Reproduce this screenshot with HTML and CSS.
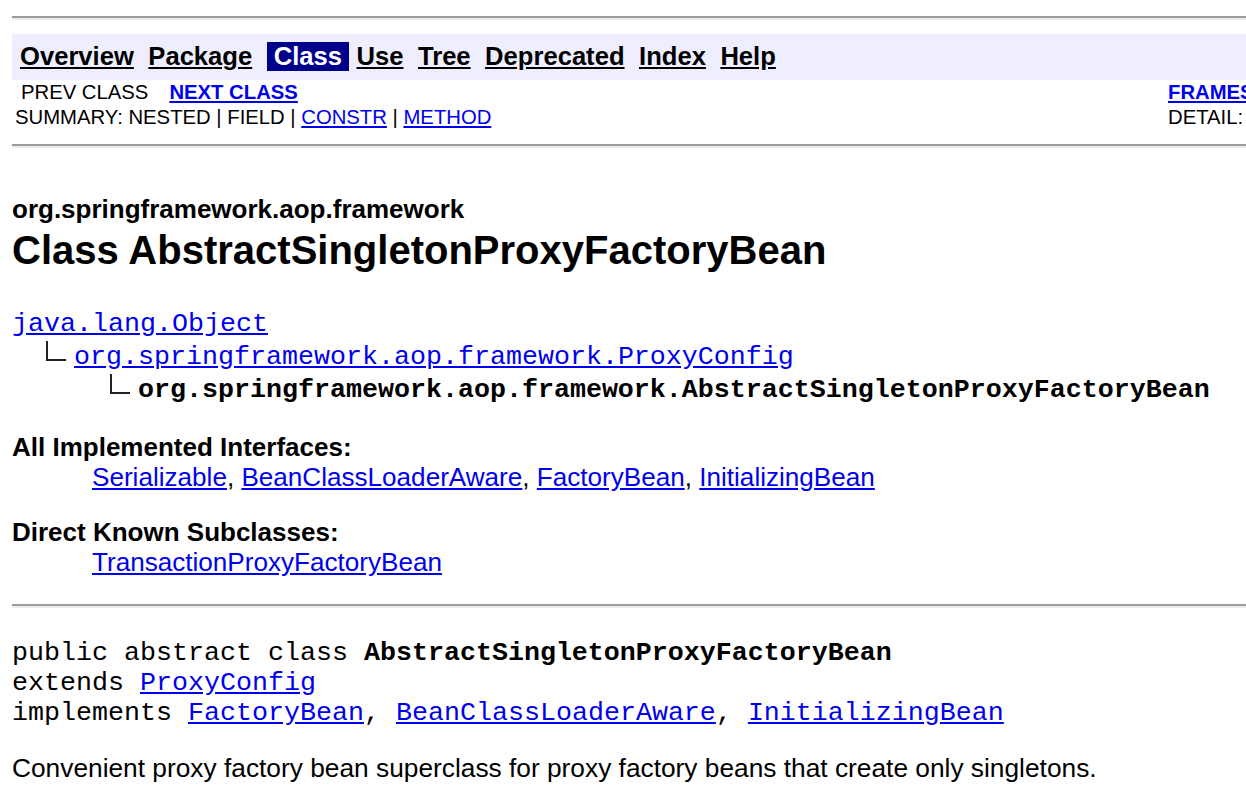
FILE: index.html
```html
<!DOCTYPE html>
<html lang="en">
<head>
<meta charset="utf-8">
<title>AbstractSingletonProxyFactoryBean</title>
<link rel="stylesheet" href="styles.css">
</head>
<body>
<div class="page">
  <hr class="rule rule-top">
  <div class="navbar">
    <a class="nav-item" href="#">Overview</a>
    <a class="nav-item" href="#">Package</a>
    <span class="nav-item nav-current">Class</span>
    <a class="nav-item" href="#">Use</a>
    <a class="nav-item" href="#">Tree</a>
    <a class="nav-item" href="#">Deprecated</a>
    <a class="nav-item" href="#">Index</a>
    <a class="nav-item" href="#">Help</a>
  </div>
  <div class="subnav">
    <div class="sub-cell sub-prevnext"><span class="prev">PREV CLASS</span><a class="next" href="#">NEXT CLASS</a></div>
    <div class="sub-cell sub-right"><a class="frames" href="#">FRAMES</a></div>
    <div class="sub-cell sub-summary">SUMMARY:&nbsp;NESTED&nbsp;|&nbsp;FIELD&nbsp;|&nbsp;<a href="#">CONSTR</a>&nbsp;|&nbsp;<a href="#">METHOD</a></div>
    <div class="sub-cell sub-right">DETAIL:</div>
  </div>
  <hr class="rule rule-mid">
  <div class="pkg">org.springframework.aop.framework</div>
  <h2 class="title">Class AbstractSingletonProxyFactoryBean</h2>
  <pre class="tree"><a href="#">java.lang.Object</a>
  <svg class="inherit" width="30" height="20" viewBox="0 0 30 20"><rect x="2" y="0" width="2" height="20" fill="#222"/><rect x="2" y="18" width="20" height="2" fill="#222"/></svg><a href="#">org.springframework.aop.framework.ProxyConfig</a>
      <svg class="inherit" width="30" height="20" viewBox="0 0 30 20"><rect x="2" y="0" width="2" height="20" fill="#222"/><rect x="2" y="18" width="20" height="2" fill="#222"/></svg><b>org.springframework.aop.framework.AbstractSingletonProxyFactoryBean</b></pre>
  <dl class="info info-first">
    <dt>All Implemented Interfaces:</dt>
    <dd><a href="#">Serializable</a>, <a href="#">BeanClassLoaderAware</a>, <a href="#">FactoryBean</a>, <a href="#">InitializingBean</a></dd>
  </dl>
  <dl class="info info-second">
    <dt>Direct Known Subclasses:</dt>
    <dd><a href="#">TransactionProxyFactoryBean</a></dd>
  </dl>
  <hr class="rule rule-bottom">
  <pre class="sig">public abstract class <b>AbstractSingletonProxyFactoryBean</b>
extends <a href="#">ProxyConfig</a>
implements <a href="#">FactoryBean</a>, <a href="#">BeanClassLoaderAware</a>, <a href="#">InitializingBean</a></pre>
  <p class="desc">Convenient proxy factory bean superclass for proxy factory beans that create only singletons.</p>
</div>
</body>
</html>
```
FILE: styles.css
```css
html {
  overflow: hidden;
  background: #fff;
}
body {
  margin: 0;
  font-family: "Liberation Sans", Arial, sans-serif;
  color: #000;
}
a {
  color: #0000ee;
}
.page {
  width: 1500px;
  padding: 16px 0 0 12px;
}
.rule {
  margin: 0;
  height: 0;
  border: 0;
  border-top: 2px solid #9c9c9c;
  border-bottom: 2px solid #ececec;
}
.rule-mid {
  margin-top: 14px;
}
.rule-bottom {
  margin-top: 27.5px;
}

/* top navigation bar */
.navbar {
  margin-top: 14px;
  background: #eeeeff;
  padding: 8px 0 9px 8px;
  display: flex;
  gap: 7.5px;
}
.nav-item {
  display: block;
  padding: 0 7px 0 0;
  font-size: 25.6px;
  line-height: 29px;
  font-weight: bold;
  color: #000;
}
.nav-current {
  padding: 0 7px;
  background: #00008b;
  color: #fff;
}

/* sub navigation */
.subnav {
  display: grid;
  grid-template-columns: 1156px auto;
  font-size: 20.3px;
  line-height: 25px;
}
.sub-cell {
  white-space: nowrap;
}
.prev {
  margin-left: 9px;
}
.next {
  margin-left: 21px;
  font-weight: bold;
}
.frames {
  font-weight: bold;
}
.sub-summary {
  padding-left: 3px;
}

/* header */
.pkg {
  margin-top: 46px;
  font-size: 26px;
  line-height: 30px;
  font-weight: bold;
}
.title {
  margin: 3px 0 0;
  font-size: 40px;
  line-height: 46px;
  font-weight: bold;
}

/* inheritance tree */
.tree {
  margin: 35px 0 0;
  font-family: "Liberation Mono", "Courier New", monospace;
  font-size: 26.67px;
  line-height: 33px;
}
.inherit {
  vertical-align: 3px;
}

/* definition lists */
.info {
  margin: 24.5px 0 0;
  font-size: 26px;
  line-height: 30px;
}
.info-second {
  margin-top: 25px;
}
.info dt {
  font-weight: bold;
}
.info dd {
  margin-left: 80px;
  font-size: 26.1px;
}

/* signature */
.sig {
  margin: 30px 0 0;
  font-family: "Liberation Mono", "Courier New", monospace;
  font-size: 26.67px;
  line-height: 30px;
}
.desc {
  margin: 26px 0 0;
  font-size: 26.3px;
  line-height: 29px;
}
```
